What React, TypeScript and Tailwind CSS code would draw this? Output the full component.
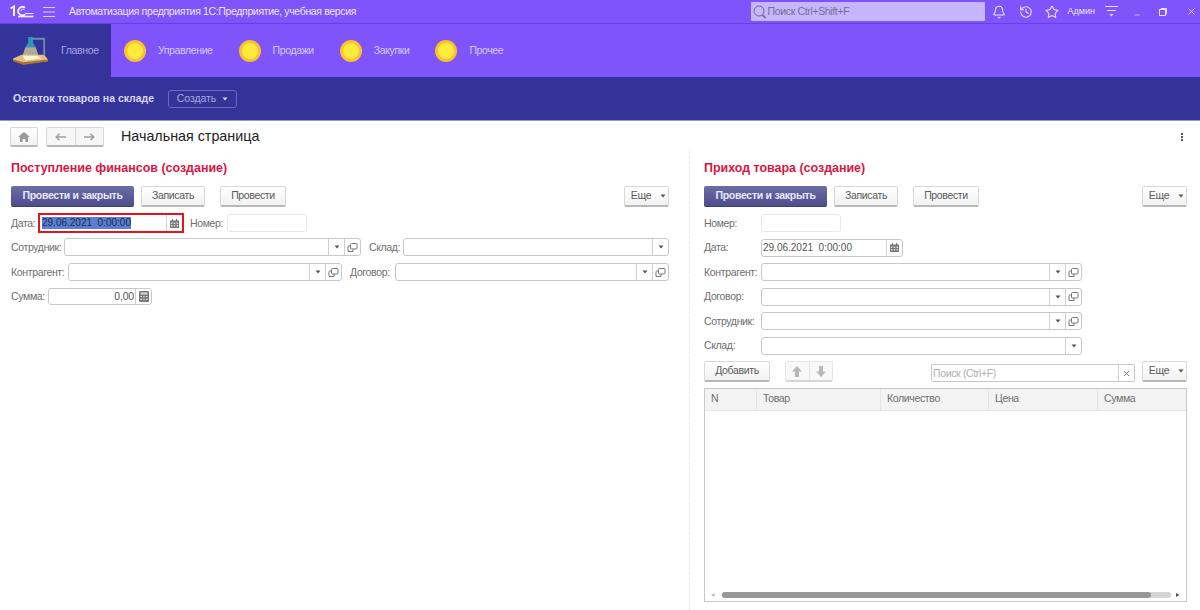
import React from 'react';
import { Bell, History, Star, X, Minus } from 'lucide-react';

const Caret = () => (
    <svg width="6" height="4" viewBox="0 0 6 4" className="shrink-0"><path d="M0.5 0.5h5L3 3.5z" fill="#555" /></svg>
);

const OpenIcon = () => (
    <svg width="11" height="11" viewBox="0 0 11 11" fill="none" stroke="#777" strokeWidth="1">
        <rect x="3.5" y="1.5" width="6.5" height="5.5" rx="1" />
        <path d="M3.5 4H1.5a1 1 0 0 0-.5 1v4.5h5V7" />
    </svg>
);

const CalendarIcon = () => (
    <svg width="9" height="9" viewBox="0 0 9 9"><path d="M0 1.5h9V9H0z" fill="#777" /><path d="M2 0h1v2H2zM6 0h1v2H6z" fill="#777" /><path d="M1 3.5h1.5V5H1zM3.8 3.5h1.5V5H3.8zM6.5 3.5H8V5H6.5zM1 6h1.5v1.5H1zM3.8 6h1.5v1.5H3.8zM6.5 6H8v1.5H6.5z" fill="#ddd" /></svg>
);

const CalcIcon = () => (
    <svg width="10" height="11" viewBox="0 0 10 11"><rect width="10" height="11" rx="1" fill="#777" /><path d="M1.5 1.5h7v2h-7z" fill="#ddd" /><path d="M1.5 5h1.5v1.3H1.5zM4.2 5h1.5v1.3H4.2zM7 5h1.5v1.3H7zM1.5 7.7h1.5V9H1.5zM4.2 7.7h1.5V9H4.2zM7 7.7h1.5V9H7z" fill="#ddd" /></svg>
);

const Coin = () => (
    <div className="w-[22px] h-[22px] rounded-full bg-[#fbc02d] flex items-center justify-center shrink-0">
        <div className="w-[16px] h-[16px] rounded-full bg-[#ffeb3b]" />
    </div>
);

const Lamp = () => (
    <svg width="38" height="32" viewBox="0 0 40 34" className="shrink-0">
        <path d="M1 25 L10 21 L34 21 L38 26 L38 28 L12 31 L1 27z" fill="#e9bd7c" />
        <path d="M1 26 L12 29 L38 26 L38 28 L12 32 L1 28z" fill="#a4713c" />
        <path d="M11 22 L27 22 L31 25 L14 27z" fill="#fff4d2" />
        <path d="M18 5 L33 5 L33 21 L35 21 L35 3 L18 3z" fill="#6f8aa8" />
        <path d="M17 2 h5 v6 l3 5 H14 l3 -5z" fill="#2a9ab8" />
        <path d="M14 13 h11 l3 9 H11z" fill="#d8d59a" opacity="0.75" />
    </svg>
);

const Btn = ({ children, className = '' }: { children: React.ReactNode; className?: string }) => (
    <div className={`h-[21px] flex items-center justify-center rounded-[2px] border border-[#d8d8d8] border-b-2 border-b-[#b8b8b8] bg-gradient-to-b from-white to-[#f2f2f2] text-[#5a5a5a] text-[10.5px] tracking-[-0.35px] ${className}`}>
        {children}
    </div>
);

const MainBtn = () => (
    <div className="w-[123px] h-[21px] flex items-center justify-center rounded-[2px] bg-gradient-to-b from-[#6d6da6] to-[#4d4d8c] border-b border-b-[#3c3c78] text-[#e8e8fa] text-[10.5px] tracking-[-0.28px] font-bold">
        Провести и закрыть
    </div>
);

const Toolbar = () => (
    <div className="flex items-start">
        <MainBtn />
        <Btn className="w-[64px] ml-[7px]">Записать</Btn>
        <Btn className="w-[66px] ml-[15px]">Провести</Btn>
        <Btn className="w-[45px] ml-auto gap-[9px] pl-[4px]">Еще <Caret /></Btn>
    </div>
);

const Cell = ({ children }: { children: React.ReactNode }) => (
    <div className="w-[16px] h-full flex items-center justify-center border-l border-[#cfcfcf] shrink-0">{children}</div>
);

const Field = ({ className = '', open = true, drop = true }: { className?: string; open?: boolean; drop?: boolean }) => (
    <div className={`h-[18px] flex border border-[#c8c8c8] rounded-[3px] bg-white ${className}`}>
        <div className="flex-1" />
        {drop && <Cell><Caret /></Cell>}
        {open && <Cell><OpenIcon /></Cell>}
    </div>
);

const Label = ({ children, className = '' }: { children: React.ReactNode; className?: string }) => (
    <span className={`text-[10.5px] tracking-[-0.35px] leading-none text-[#6e6e6e] whitespace-nowrap ${className}`}>{children}</span>
);

const FinancePanel = () => (
    <div className="w-[690px] h-full pl-[11px] pr-[20px] pt-[9px] border-r border-dashed border-[#e8e8e8] shrink-0">
        <h2 className="text-[12.45px] leading-[16px] font-bold text-[#d9163f] mb-[10px]">Поступление финансов (создание)</h2>
        <Toolbar />
        <div className="flex items-center mt-[6px] h-[20px]">
            <Label className="w-[27px]">Дата:</Label>
            <div className="w-[146px] h-[20px] flex border-2 border-[#e8141c] bg-white">
                <div className="flex-1 pl-[2px] flex items-center">
                    <span className="text-[10px] leading-[12px] bg-[#5a7fd0] text-[#1d2a55] whitespace-pre">29.06.2021  0:00:00</span>
                </div>
                <Cell><CalendarIcon /></Cell>
            </div>
            <Label className="ml-[6px] w-[37px]">Номер:</Label>
            <div className="w-[80px] h-[18px] border border-[#e8e8e8] rounded-[3px]" />
        </div>
        <div className="flex items-center mt-[5px]">
            <Label className="w-[53px]">Сотрудник:</Label>
            <Field className="w-[297px]" />
            <Label className="ml-[8px] w-[34px]">Склад:</Label>
            <Field className="flex-1" open={false} />
        </div>
        <div className="flex items-center mt-[7px]">
            <Label className="w-[57px]">Контрагент:</Label>
            <Field className="w-[274px]" />
            <Label className="ml-[8px] w-[45px]">Договор:</Label>
            <Field className="flex-1" />
        </div>
        <div className="flex items-center mt-[7px]">
            <Label className="w-[37px]">Сумма:</Label>
            <div className="w-[104px] h-[17px] flex border border-[#c8c8c8] rounded-[3px]">
                <div className="flex-1 text-right pr-[1px] text-[10.5px] tracking-[-0.2px] leading-[15px] text-[#555]">0,00</div>
                <Cell><CalcIcon /></Cell>
            </div>
        </div>
    </div>
);

const FormRow = ({ label, children }: { label: string; children: React.ReactNode }) => (
    <div className="flex items-center h-[18px] mb-[6.5px]">
        <Label className="w-[57px]">{label}</Label>
        {children}
    </div>
);

const columns = [
    { title: 'N', width: 'w-[52px]' },
    { title: 'Товар', width: 'w-[124px]' },
    { title: 'Количество', width: 'w-[108px]' },
    { title: 'Цена', width: 'w-[109px]' },
    { title: 'Сумма', width: 'flex-1' },
];

const GoodsPanel = () => (
    <div className="flex-1 h-full pl-[14px] pr-[13px] pt-[9px] flex flex-col pb-[8px] min-w-0">
        <h2 className="text-[12.45px] leading-[16px] font-bold text-[#d9163f] mb-[10px]">Приход товара (создание)</h2>
        <Toolbar />
        <div className="mt-[7px]">
            <FormRow label="Номер:">
                <div className="w-[80px] h-[18px] border border-[#e8e8e8] rounded-[3px]" />
            </FormRow>
            <FormRow label="Дата:">
                <div className="w-[142px] h-[18px] flex border border-[#c8c8c8] rounded-[3px]">
                    <div className="flex-1 pl-[1px] text-[10px] leading-[16px] text-[#555] whitespace-pre">29.06.2021  0:00:00</div>
                    <Cell><CalendarIcon /></Cell>
                </div>
            </FormRow>
            <FormRow label="Контрагент:"><Field className="w-[321px]" /></FormRow>
            <FormRow label="Договор:"><Field className="w-[321px]" /></FormRow>
            <FormRow label="Сотрудник:"><Field className="w-[321px]" /></FormRow>
            <FormRow label="Склад:"><Field className="w-[321px]" open={false} /></FormRow>
        </div>
        <div className="flex items-end">
            <Btn className="w-[66px]">Добавить</Btn>
            <div className="w-[48px] h-[21px] ml-[15px] flex rounded-[2px] border border-[#e6e6e6] border-b-2 border-b-[#d6d6d6] bg-[#f8f8f8]">
                <div className="flex-1 flex items-center justify-center border-r border-[#e6e6e6]">
                    <svg width="10" height="11" viewBox="0 0 10 11"><path d="M5 0l5 5.5H7V11H3V5.5H0z" fill="#b8b8b8" /></svg>
                </div>
                <div className="flex-1 flex items-center justify-center">
                    <svg width="10" height="11" viewBox="0 0 10 11"><path d="M5 11L0 5.5h3V0h4v5.5h3z" fill="#b8b8b8" /></svg>
                </div>
            </div>
            <div className="w-[204px] h-[18px] ml-[98px] flex border border-[#c8c8c8] rounded-[2px]">
                <div className="flex-1 pl-[1px] text-[10.5px] tracking-[-0.35px] leading-[16px] text-[#b0b0b0]">Поиск (Ctrl+F)</div>
                <Cell><X size={9} color="#555" strokeWidth={2} /></Cell>
            </div>
            <Btn className="w-[45px] ml-[7px] gap-[9px] pl-[4px]">Еще <Caret /></Btn>
        </div>
        <div className="flex-1 mt-[6px] border border-[#c8c8c8] flex flex-col">
            <div className="flex h-[22px] bg-[#f3f3f3] border-b border-[#e8e8e8]">
                {columns.map(col => (
                    <div key={col.title} className={`${col.width} pl-[6px] pb-[1px] flex items-center text-[10.5px] tracking-[-0.35px] text-[#6e6e6e] border-r border-[#e4e4e4] last:border-r-0`}>
                        {col.title}
                    </div>
                ))}
            </div>
            <div className="flex-1" />
            <div className="h-[10px] flex items-center pl-[6px] pr-[6px] mb-[1px]">
                <svg width="4" height="4" viewBox="0 0 4 4" className="shrink-0"><path d="M3.5 0v4L0 2z" fill="#bbb" /></svg>
                <div className="flex-1 ml-[7px] mr-[5px] h-[6px] rounded-full bg-[#d5d5d5] flex">
                    <div className="w-[429px] h-full rounded-full bg-[#989898]" />
                </div>
                <svg width="4" height="4" viewBox="0 0 4 4" className="shrink-0"><path d="M0 0v4l3.5-2z" fill="#555" /></svg>
            </div>
        </div>
    </div>
);

const sections = ['Управление', 'Продажи', 'Закупки', 'Прочее'];

const App: React.FC = () => {
    return (
        <div className="w-[1200px] h-[610px] flex flex-col bg-white overflow-hidden font-['Liberation_Sans',Arial,sans-serif]">
            {/* top bar */}
            <div className="h-[24px] bg-[#7f54fb] border-b border-[#6a3ee6] flex items-center shrink-0 text-[#ece6ff]">
                <svg width="24" height="13" viewBox="0 0 24 13" fill="none" stroke="#f2eeff" className="ml-[10px] shrink-0">
                    <path d="M0.5 3.5 L4 1.5 V11" strokeWidth="2" />
                    <path d="M16 2.8 A4.2 4.2 0 1 0 16 9.5" strokeWidth="1.8" transform="translate(-1 0)" />
                    <path d="M11 6 A2 2 0 0 1 14.5 4.8" strokeWidth="1" />
                    <path d="M8 11.5 H23.5" strokeWidth="1.6" />
                    <path d="M15 8.6 H23.5" strokeWidth="1" />
                </svg>
                <svg width="12" height="10" viewBox="0 0 12 10" className="ml-[9px]" stroke="#d9d0fe" strokeWidth="1">
                    <path d="M0 .5h12M0 5h12M0 9.5h12" />
                </svg>
                <span className="ml-[14px] text-[10.5px] tracking-[-0.35px] whitespace-nowrap">Автоматизация предприятия 1С:Предприятие, учебная версия</span>
                <div className="ml-auto w-[234px] h-[19px] bg-[#c6b6ff] rounded-[1px] flex items-center pl-[2px]">
                    <svg width="13" height="14" viewBox="0 0 13 14" fill="none" stroke="#6f6a80" strokeWidth="1">
                        <circle cx="6" cy="6" r="5" /><path d="M9.5 10l3 3" strokeWidth="1.6" />
                    </svg>
                    <span className="ml-[2px] text-[10.5px] tracking-[-0.35px] text-[#75708c]">Поиск Ctrl+Shift+F</span>
                </div>
                <Bell size={14} className="ml-[7px]" strokeWidth={1.8} />
                <History size={14} className="ml-[13px]" strokeWidth={1.8} />
                <Star size={14} className="ml-[12px]" strokeWidth={1.8} />
                <span className="ml-[9px] text-[9px]">Админ</span>
                <svg width="13" height="11" viewBox="0 0 13 11" className="ml-[10px]" stroke="#e6defe" strokeWidth="1">
                    <path d="M0 .5h13M2 4.5h9" /><path d="M4.5 8h4L6.5 10.5z" fill="#e6defe" stroke="none" />
                </svg>
                <Minus size={8} className="ml-[15px] mt-[6px]" />
                <svg width="8" height="8" viewBox="0 0 8 8" fill="none" stroke="#e6defe" className="ml-[18px]">
                    <rect x=".5" y="1.5" width="6" height="6" /><path d="M2 1V.5h5.5V6H7" />
                </svg>
                <X size={11} className="ml-[19px] mr-[3px]" strokeWidth={1.6} />
            </div>

            {/* sections */}
            <div className="h-[53px] bg-[#7f54fb] flex items-center shrink-0">
                <div className="w-[111px] h-full bg-[#333399] flex items-center pl-[12px] shrink-0">
                    <Lamp />
                    <span className="ml-[11px] text-[10.5px] tracking-[-0.35px] text-[#a9a4e0]">Главное</span>
                </div>
                <div className="flex items-center gap-[26px] pl-[13px]">
                    {sections.map(name => (
                        <div key={name} className="flex items-center gap-[12px]">
                            <Coin />
                            <span className="text-[10.5px] tracking-[-0.38px] text-[#d5cbfd]">{name}</span>
                        </div>
                    ))}
                </div>
            </div>

            {/* function panel */}
            <div className="h-[44px] bg-[#333399] border-b border-b-[#9a9aa8] flex items-center pl-[13px] shrink-0">
                <span className="text-[10.5px] font-bold text-[#d9d9f2] tracking-[-0.03px]">Остаток товаров на складе</span>
                <div className="ml-[14px] w-[69px] h-[18px] border border-[#6a6ab5] rounded-[3px] flex items-center justify-center gap-[6px] text-[10.5px] tracking-[-0.1px] text-[#a9a9dc]">
                    Создать
                    <svg width="6" height="4" viewBox="0 0 6 4"><path d="M.5.5h5L3 3.5z" fill="#d9d9f2" /></svg>
                </div>
            </div>

            {/* nav row */}
            <div className="h-[30px] flex items-center pl-[10px] shrink-0 pr-[17px] pt-[2px]">
                <Btn className="w-[28px] !h-[20px]">
                    <svg width="12" height="10" viewBox="0 0 12 10"><path d="M6 0l6 5h-2v5H7.3V7H4.7v3H2V5H0z" fill="#9a9a9a" /></svg>
                </Btn>
                <div className="w-[58px] h-[20px] ml-[8px] flex rounded-[2px] border border-[#d8d8d8] border-b-2 border-b-[#b8b8b8] bg-[#f6f6f6]">
                    <div className="flex-1 flex items-center justify-center border-r border-[#d8d8d8]">
                        <svg width="11" height="8" viewBox="0 0 11 8" fill="none" stroke="#a0a0a0" strokeWidth="1.6"><path d="M11 4H1.5M4.5 .8L1.3 4l3.2 3.2" /></svg>
                    </div>
                    <div className="flex-1 flex items-center justify-center">
                        <svg width="11" height="8" viewBox="0 0 11 8" fill="none" stroke="#a0a0a0" strokeWidth="1.6"><path d="M0 4h9.5M6.5 .8L9.7 4 6.5 7.2" /></svg>
                    </div>
                </div>
                <span className="ml-[17px] text-[14.3px] text-[#222]">Начальная страница</span>
                <div className="ml-auto flex flex-col gap-[1px]">
                    <div className="w-[2px] h-[2px] bg-[#555]" />
                    <div className="w-[2px] h-[2px] bg-[#555]" />
                    <div className="w-[2px] h-[2px] bg-[#555]" />
                </div>
            </div>

            <div className="flex-1 flex min-h-0">
                <FinancePanel />
                <GoodsPanel />
            </div>
        </div>
    );
};

export default App;
